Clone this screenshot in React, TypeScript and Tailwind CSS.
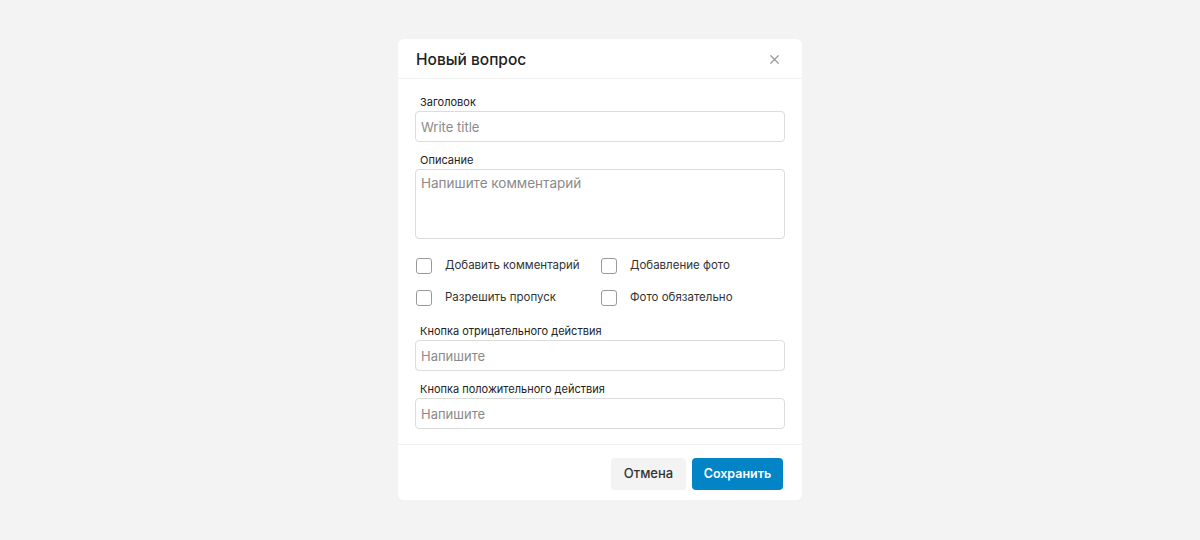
import { X } from "lucide-react";

const font = { fontFamily: "Inter, 'Noto Sans', sans-serif" };

function Label({ children }: { children: React.ReactNode }) {
  return <label className="text-[11px] leading-[14px] text-[#222] pl-[5px] mb-[2px]">{children}</label>;
}

function Field({ label, placeholder }: { label: string; placeholder: string }) {
  return (
    <div className="flex flex-col">
      <Label>{label}</Label>
      <input
        placeholder={placeholder}
        className="h-[31px] w-full rounded-[4px] border border-[#dcdcdc] px-[5px] text-[13px] text-[#222] placeholder:text-[#8a8a8a] outline-none"
      />
    </div>
  );
}

function Check({ label }: { label: string }) {
  return (
    <label className="flex items-center gap-[13px] h-[16px] text-[11.5px] text-[#333]">
      <span className="w-[16px] h-[16px] shrink-0 rounded-[3px] border-[1.5px] border-[#9a9a9a] bg-white" />
      {label}
    </label>
  );
}

export default function App() {
  return (
    <div className="w-[1200px] h-[540px] bg-[#f3f3f3] flex items-start justify-center pt-[39px]" style={font}>
      <div className="w-[404px] bg-white rounded-[6px] flex flex-col">
        {/* Header */}
        <div className="h-[40px] flex items-center justify-between pl-[18px] pr-[20px] pt-[2px] border-b border-[#f1f1f1]">
          <h2 className="text-[15.5px] font-medium text-[#222]">Новый вопрос</h2>
          <X className="w-[15px] h-[15px] text-[#999]" strokeWidth={2} />
        </div>

        {/* Body */}
        <div className="px-[17px] pt-[16px] pb-[15px] flex flex-col">
          <Field label="Заголовок" placeholder="Write title" />

          <div className="flex flex-col mt-[11px]">
            <Label>Описание</Label>
            <textarea
              placeholder="Напишите комментарий"
              className="h-[70px] w-full resize-none rounded-[4px] border border-[#dcdcdc] px-[5px] py-[3px] text-[13.5px] text-[#222] placeholder:text-[#8a8a8a] outline-none"
            />
          </div>

          <div className="grid grid-cols-[185px_1fr] gap-y-[16px] mt-[19px] pl-[1px]">
            <Check label="Добавить комментарий" />
            <Check label="Добавление фото" />
            <Check label="Разрешить пропуск" />
            <Check label="Фото обязательно" />
          </div>

          <div className="mt-[18px] flex flex-col gap-[11px]">
            <Field label="Кнопка отрицательного действия" placeholder="Напишите" />
            <Field label="Кнопка положительного действия" placeholder="Напишите" />
          </div>
        </div>

        {/* Footer */}
        <div className="border-t border-[#f1f1f1] flex justify-end gap-[6px] pt-[13px] pb-[10px] pr-[19px]">
          <button className="h-[32px] w-[75px] rounded-[4px] bg-[#f3f3f3] text-[13px] font-medium text-[#333]">
            Отмена
          </button>
          <button className="h-[32px] w-[91px] rounded-[4px] bg-[#0284c7] text-[12.5px] font-semibold text-white">
            Сохранить
          </button>
        </div>
      </div>
    </div>
  );
}
